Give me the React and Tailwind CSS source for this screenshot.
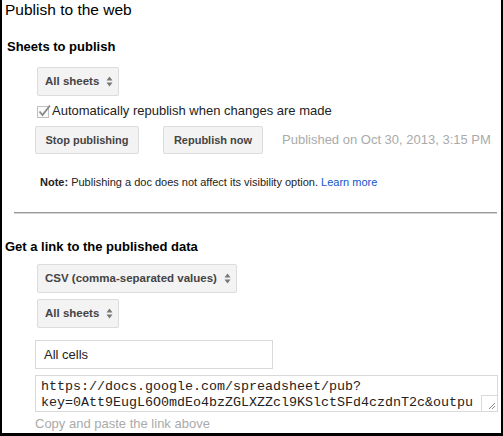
import React from 'react';

const SelectArrows = () => (
  <svg width="7" height="11" viewBox="0 0 7 11" className="ml-[7px]">
    <path d="M0.5 4.5 L3.5 0.5 L6.5 4.5 Z" fill="#777" />
    <path d="M0.5 6.5 L3.5 10.5 L6.5 6.5 Z" fill="#777" />
  </svg>
);

const Select = ({ label, width }) => (
  <div
    className={`flex items-center h-[29px] ${width} pl-[7px] bg-[#f3f3f3] border border-[#dcdcdc] rounded-[2px] text-[11.5px] font-bold text-[#444]`}
  >
    <span>{label}</span>
    <SelectArrows />
  </div>
);

const Button = ({ label, width }) => (
  <div
    className={`flex items-center justify-center h-[28px] ${width} bg-[#f3f3f3] border border-[#dcdcdc] rounded-[2px] text-[11px] font-bold text-[#444]`}
  >
    {label}
  </div>
);

export default function App() {
  return (
    <div
      className="w-[503px] h-[436px] box-border border-l-2 border-r-2 border-b-[3px] border-black bg-white overflow-hidden flex flex-col"
      style={{ fontFamily: 'Arial, "Liberation Sans", sans-serif' }}
    >
      {/* Title */}
      <div className="pl-[3px] h-[20px] leading-[20px] text-[15.5px] text-black">Publish to the web</div>

      {/* Sheets to publish */}
      <div className="mt-[19px] pl-[5px] h-[16px] leading-[16px] text-[13px] font-bold text-black">Sheets to publish</div>

      <div className="mt-[12px] pl-[35px]">
        <Select label="All sheets" width="w-[82px]" />
      </div>

      <div className="mt-[7px] pl-[35px] flex items-center h-[16px]">
        <div className="relative w-[12px] h-[12px] border border-[#c0c0c0] bg-[#fafafa] mt-[2px]">
          <svg width="15" height="15" viewBox="0 0 15 15" className="absolute left-[-1px] top-[-4px] overflow-visible">
            <path d="M2.5 8.5 L5.5 12 L13 2.5" stroke="#888" strokeWidth="1.8" fill="none" />
          </svg>
        </div>
        <span className="ml-[3px] text-[13px] leading-[16px] text-[#222]">Automatically republish when changes are made</span>
      </div>

      <div className="mt-[7px] pl-[33px] flex items-center">
        <Button label="Stop publishing" width="w-[104px]" />
        <div className="ml-[24px]">
          <Button label="Republish now" width="w-[100px]" />
        </div>
        <span className="ml-[19px] text-[13px] text-[#aaa]">Published on Oct 30, 2013, 3:15 PM</span>
      </div>

      <div className="mt-[21px] pl-[38px] h-[14px] leading-[14px] text-[11px] text-[#222]">
        <span className="font-bold">Note:</span> Publishing a doc does not affect its visibility option.{' '}
        <span className="text-[#1155cc]">Learn more</span>
      </div>

      <div className="mt-[23px] ml-[12px] mr-[4px] h-[2px] border-t border-[#9a9a9a] border-b border-b-[#d4d4d4]" />

      {/* Get a link */}
      <div className="mt-[25px] pl-[3px] h-[16px] leading-[16px] text-[13px] font-bold text-black">Get a link to the published data</div>

      <div className="mt-[9px] pl-[35px]">
        <Select label="CSV (comma-separated values)" width="w-[200px]" />
      </div>
      <div className="mt-[6px] pl-[35px]">
        <Select label="All sheets" width="w-[82px]" />
      </div>

      <div className="mt-[12px] pl-[33px]">
        <div className="w-[238px] h-[29px] border border-[#d9d9d9] flex items-center pl-[8px] text-[13px] text-[#222]">All cells</div>
      </div>

      <div className="mt-[6px] pl-[33px]">
        <div className="relative w-[463px] h-[37px] border border-[#d9d9d9] overflow-hidden pl-[5px] pt-[3px]">
          <div
            className="w-[440px] overflow-hidden text-[13.33px] leading-[16px] text-[#222] whitespace-pre"
            style={{ fontFamily: '"Courier New", "Liberation Mono", monospace' }}
          >
            {'https://docs.google.com/spreadsheet/pub?\nkey=0Att9EugL6O0mdEo4bzZGLXZZcl9KSlctSFd4czdnT2c&outpu'}
          </div>
          <div className="absolute right-0 bottom-0 w-[16px] h-[16px] bg-white border-l border-t border-[#d9d9d9]">
            <svg width="16" height="16" viewBox="0 0 16 16" className="absolute left-0 top-0">
              <path d="M13 7 L7 13 M13 10 L10 13" stroke="#888" strokeWidth="1" />
            </svg>
          </div>
        </div>
      </div>

      <div className="mt-[4px] pl-[33px] h-[16px] leading-[16px] text-[13px] text-[#aaa]">Copy and paste the link above</div>
    </div>
  );
}
